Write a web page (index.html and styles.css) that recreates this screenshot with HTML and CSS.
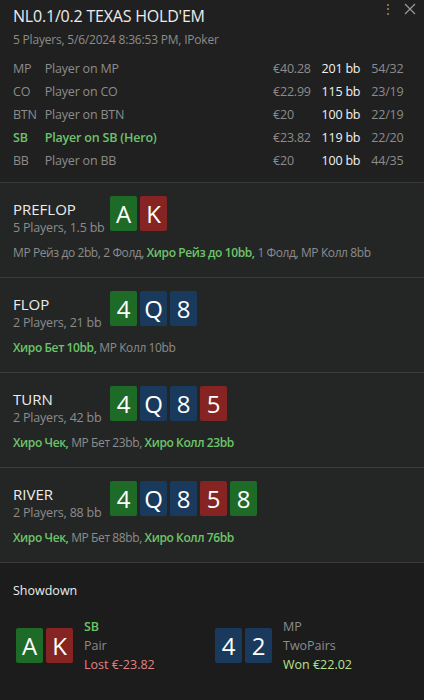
FILE: index.html
```html
<!DOCTYPE html>
<html lang="en">
<head>
  <meta charset="UTF-8" />
  <title>Hand History</title>
  <link rel="stylesheet" href="styles.css">
</head>
<body>
  <div class="panel">
    <!-- Header -->
    <div class="header">
      <div class="window-btns">
        <span class="dots">⋮</span>
        <svg width="12" height="12" viewBox="0 0 12 12"><path d="M1 1 L11 11 M11 1 L1 11" stroke="#9a9a9a" stroke-width="1.2"/></svg>
      </div>
      <div class="title">NL0.1/0.2 TEXAS HOLD'EM</div>
      <div class="subtitle">5 Players, 5/6/2024 8:36:53 PM, IPoker</div>

      <div class="players">
        <div class="player-row"><span class="pos">MP</span><span class="name">Player on MP</span><span class="money">€40.28</span><span class="bb">201 bb</span><span class="ratio">54/32</span></div>
        <div class="player-row"><span class="pos">CO</span><span class="name">Player on CO</span><span class="money">€22.99</span><span class="bb">115 bb</span><span class="ratio">23/19</span></div>
        <div class="player-row"><span class="pos">BTN</span><span class="name">Player on BTN</span><span class="money">€20</span><span class="bb">100 bb</span><span class="ratio">22/19</span></div>
        <div class="player-row hero"><span class="pos">SB</span><span class="name">Player on SB (Hero)</span><span class="money">€23.82</span><span class="bb">119 bb</span><span class="ratio">22/20</span></div>
        <div class="player-row"><span class="pos">BB</span><span class="name">Player on BB</span><span class="money">€20</span><span class="bb">100 bb</span><span class="ratio">44/35</span></div>
      </div>
    </div>

    <!-- Streets -->
    <div class="street">
      <div class="street-top">
        <div class="street-info">
          <div class="street-name">PREFLOP</div>
          <div class="street-sub">5 Players, 1.5 bb</div>
        </div>
        <div class="cards">
          <span class="card green">A</span><span class="card red">K</span>
        </div>
      </div>
      <div class="actions">MP Рейз до 2bb, 2 Фолд, <b>Хиро Рейз до 10bb,</b> 1 Фолд, MP Колл 8bb</div>
    </div>

    <div class="street">
      <div class="street-top">
        <div class="street-info">
          <div class="street-name">FLOP</div>
          <div class="street-sub">2 Players, 21 bb</div>
        </div>
        <div class="cards">
          <span class="card green">4</span><span class="card blue">Q</span><span class="card blue">8</span>
        </div>
      </div>
      <div class="actions"><b>Хиро Бет 10bb,</b> MP Колл 10bb</div>
    </div>

    <div class="street">
      <div class="street-top">
        <div class="street-info">
          <div class="street-name">TURN</div>
          <div class="street-sub">2 Players, 42 bb</div>
        </div>
        <div class="cards">
          <span class="card green">4</span><span class="card blue">Q</span><span class="card blue">8</span><span class="card red">5</span>
        </div>
      </div>
      <div class="actions"><b>Хиро Чек,</b> MP Бет 23bb, <b>Хиро Колл 23bb</b></div>
    </div>

    <div class="street">
      <div class="street-top">
        <div class="street-info">
          <div class="street-name">RIVER</div>
          <div class="street-sub">2 Players, 88 bb</div>
        </div>
        <div class="cards">
          <span class="card green">4</span><span class="card blue">Q</span><span class="card blue">8</span><span class="card red">5</span><span class="card green">8</span>
        </div>
      </div>
      <div class="actions"><b>Хиро Чек,</b> MP Бет 88bb, <b>Хиро Колл 76bb</b></div>
    </div>

    <!-- Showdown -->
    <div class="showdown">
      <div class="showdown-title">Showdown</div>
      <div class="showdown-row">
        <div class="sd-player">
          <div class="cards">
            <span class="card green">A</span><span class="card red">K</span>
          </div>
          <div class="sd-info">
            <div class="sd-pos hero-text">SB</div>
            <div class="sd-hand">Pair</div>
            <div class="lost">Lost €-23.82</div>
          </div>
        </div>
        <div class="sd-player">
          <div class="cards">
            <span class="card blue">4</span><span class="card blue">2</span>
          </div>
          <div class="sd-info">
            <div class="sd-pos">MP</div>
            <div class="sd-hand">TwoPairs</div>
            <div class="won">Won €22.02</div>
          </div>
        </div>
      </div>
    </div>
  </div>
</body>
</html>
```

FILE: styles.css
```css
body {
  font-family: 'Open Sans', 'Noto Sans', sans-serif;
  background: #1c1c1c;
  margin: 0;
  padding: 0;
  color: #e6e6e6;
}

.panel {
  width: 424px;
  height: 700px;
  display: flex;
  flex-direction: column;
  overflow: hidden;
}

.header {
  position: relative;
  background: #202020;
  padding: 5px 13px 10px 13px;
  border-bottom: 1px solid #383a39;
}

.window-btns {
  position: absolute;
  top: 0;
  right: 8px;
  display: flex;
  align-items: center;
  gap: 10px;
  color: #9a9a9a;
  font-size: 12px;
}

.title {
  font-size: 16px;
  color: #ececec;
  line-height: 22px;
  letter-spacing: -0.2px;
}

.subtitle {
  font-size: 12px;
  color: #8c8c8c;
  margin-top: 4px;
  letter-spacing: -0.2px;
}

.players {
  margin-top: 9px;
}

.player-row {
  display: flex;
  font-size: 12.5px;
  height: 23px;
  line-height: 23px;
  color: #8c8c8c;
  letter-spacing: -0.2px;
}

.pos { width: 32px; }
.name { width: 230px; }
.money { width: 43px; }
.bb { width: 45px; color: #f2f2f2; text-align: right; margin-right: 11px; }
.ratio { width: 40px; }

.player-row.hero .pos,
.player-row.hero .name {
  color: #6cc46a;
  font-weight: 600;
}

.street {
  background: #242625;
  padding: 13px 13px 12px 13px;
  border-bottom: 1px solid #3a3c3b;
  height: 69px;
}

.street-top {
  display: flex;
  align-items: flex-start;
}

.street-info {
  width: 97px;
  padding-top: 4px;
}

.street-name {
  font-size: 15px;
  line-height: 19px;
  color: #ececec;
}

.street-sub {
  font-size: 12.5px;
  line-height: 17px;
  color: #8c8c8c;
  letter-spacing: -0.2px;
}

.cards {
  display: flex;
  gap: 3px;
}

.card {
  width: 27px;
  height: 35px;
  border-radius: 2px;
  color: #ffffff;
  font-size: 24px;
  line-height: 35px;
  text-align: center;
}

.card.green { background: #1e6b28; }
.card.red { background: #862424; }
.card.blue { background: #193a5c; }

.actions {
  font-size: 12px;
  color: #8c8c8c;
  margin-top: 8px;
  letter-spacing: -0.4px;
}

.actions b,
.hero-text {
  color: #6cc46a;
  font-weight: 600;
}

.showdown {
  flex: 1;
  background: #1c1c1c;
  padding: 19px 13px 0 13px;
}

.showdown-title {
  font-size: 12.5px;
  color: #ececec;
}

.showdown-row {
  display: flex;
  margin-top: 26px;
}

.sd-player {
  display: flex;
  width: 200px;
  padding-left: 3px;
}

.sd-player .cards {
  margin-top: 3px;
}

.sd-info {
  margin-left: 11px;
  font-size: 12.5px;
  line-height: 19px;
  color: #8c8c8c;
  margin-top: -8px;
}

.lost { color: #e08383; }
.won { color: #b9e38c; }
```
